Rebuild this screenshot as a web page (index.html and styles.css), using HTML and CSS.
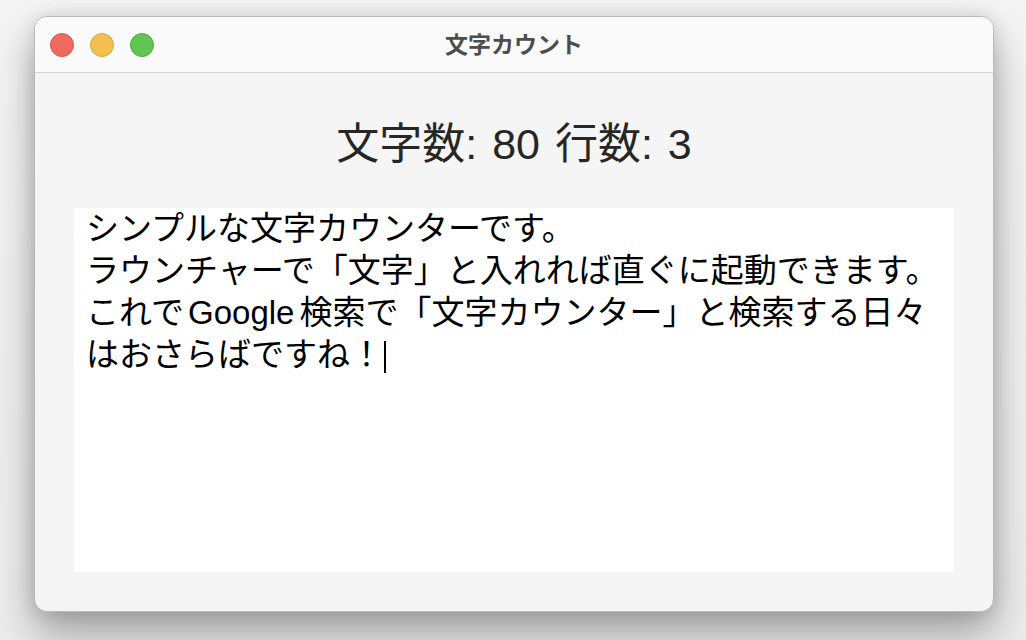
FILE: index.html
```html
<!DOCTYPE html>
<html lang="ja">
<head>
<meta charset="utf-8">
<title>文字カウント</title>
<link rel="stylesheet" href="styles.css">
</head>
<body>
<div class="window">
  <div class="titlebar">
    <div class="lights">
      <span class="light red"></span>
      <span class="light yellow"></span>
      <span class="light green"></span>
    </div>
    <div class="title">文字カウント</div>
  </div>
  <div class="content">
    <div class="stats">文字数: 80 行数: 3</div>
    <div class="editor">シンプルな文字カウンターです。<br>ラウンチャーで「文字」と入れれば直ぐに起動できます。<br>これで<span class="latin">Google</span>検索で「文字カウンター」と検索する日々<br>はおさらばですね！<span class="caret"></span></div>
  </div>
</div>
</body>
</html>
```

FILE: styles.css
```css
html, body {
  margin: 0;
  padding: 0;
}
body {
  width: 1026px;
  height: 640px;
  overflow: hidden;
  background: linear-gradient(180deg, #f4f4f4 0%, #ececec 100%);
  font-family: "Liberation Sans", "Noto Sans CJK JP", sans-serif;
}
.window {
  margin: 16px 0 0 34px;
  width: 960px;
  height: 596px;
  box-sizing: border-box;
  border-radius: 13px;
  background: #f5f5f5;
  border: 1px solid #b9b9b9;
  box-shadow: 0 22px 40px rgba(0, 0, 0, 0.32), 0 0 18px rgba(0, 0, 0, 0.12);
  display: flex;
  flex-direction: column;
  overflow: hidden;
}
.titlebar {
  height: 56px;
  flex: none;
  box-sizing: border-box;
  background: #fafafa;
  border-bottom: 1px solid #d6d6d6;
  display: flex;
  align-items: center;
  position: relative;
}
.lights {
  display: flex;
  gap: 16px;
  padding-left: 15px;
  padding-top: 1px;
}
.light {
  width: 22px;
  height: 22px;
  border-radius: 50%;
  display: block;
}
.red {
  background: #ee6a5f;
  border: 1px solid #d8574c;
}
.yellow {
  background: #f5bf4f;
  border: 1px solid #d9a53c;
}
.green {
  background: #61c554;
  border: 1px solid #4eaa43;
}
.title {
  position: absolute;
  left: 0;
  right: 0;
  top: 0;
  bottom: 4px;
  display: flex;
  align-items: center;
  justify-content: center;
  font-family: "Noto Sans CJK JP", sans-serif;
  font-weight: 700;
  font-size: 23px;
  color: #4d4d4d;
  pointer-events: none;
}
.content {
  flex: 1;
  display: flex;
  flex-direction: column;
  padding: 0 39px 39px;
}
.stats {
  height: 135px;
  flex: none;
  display: flex;
  align-items: center;
  justify-content: center;
  font-size: 43px;
  word-spacing: 3px;
  color: #262626;
  padding-bottom: 2px;
  box-sizing: border-box;
}
.editor {
  flex: 1;
  background: #ffffff;
  padding: 0 12px;
  font-size: 33px;
  line-height: 42px;
  color: #000;
  white-space: nowrap;
}
.latin {
  margin: 0 5px 0 4px;
}
.caret {
  display: inline-block;
  width: 2px;
  height: 32px;
  background: #000;
  vertical-align: -7px;
  margin-left: 1px;
}
```
